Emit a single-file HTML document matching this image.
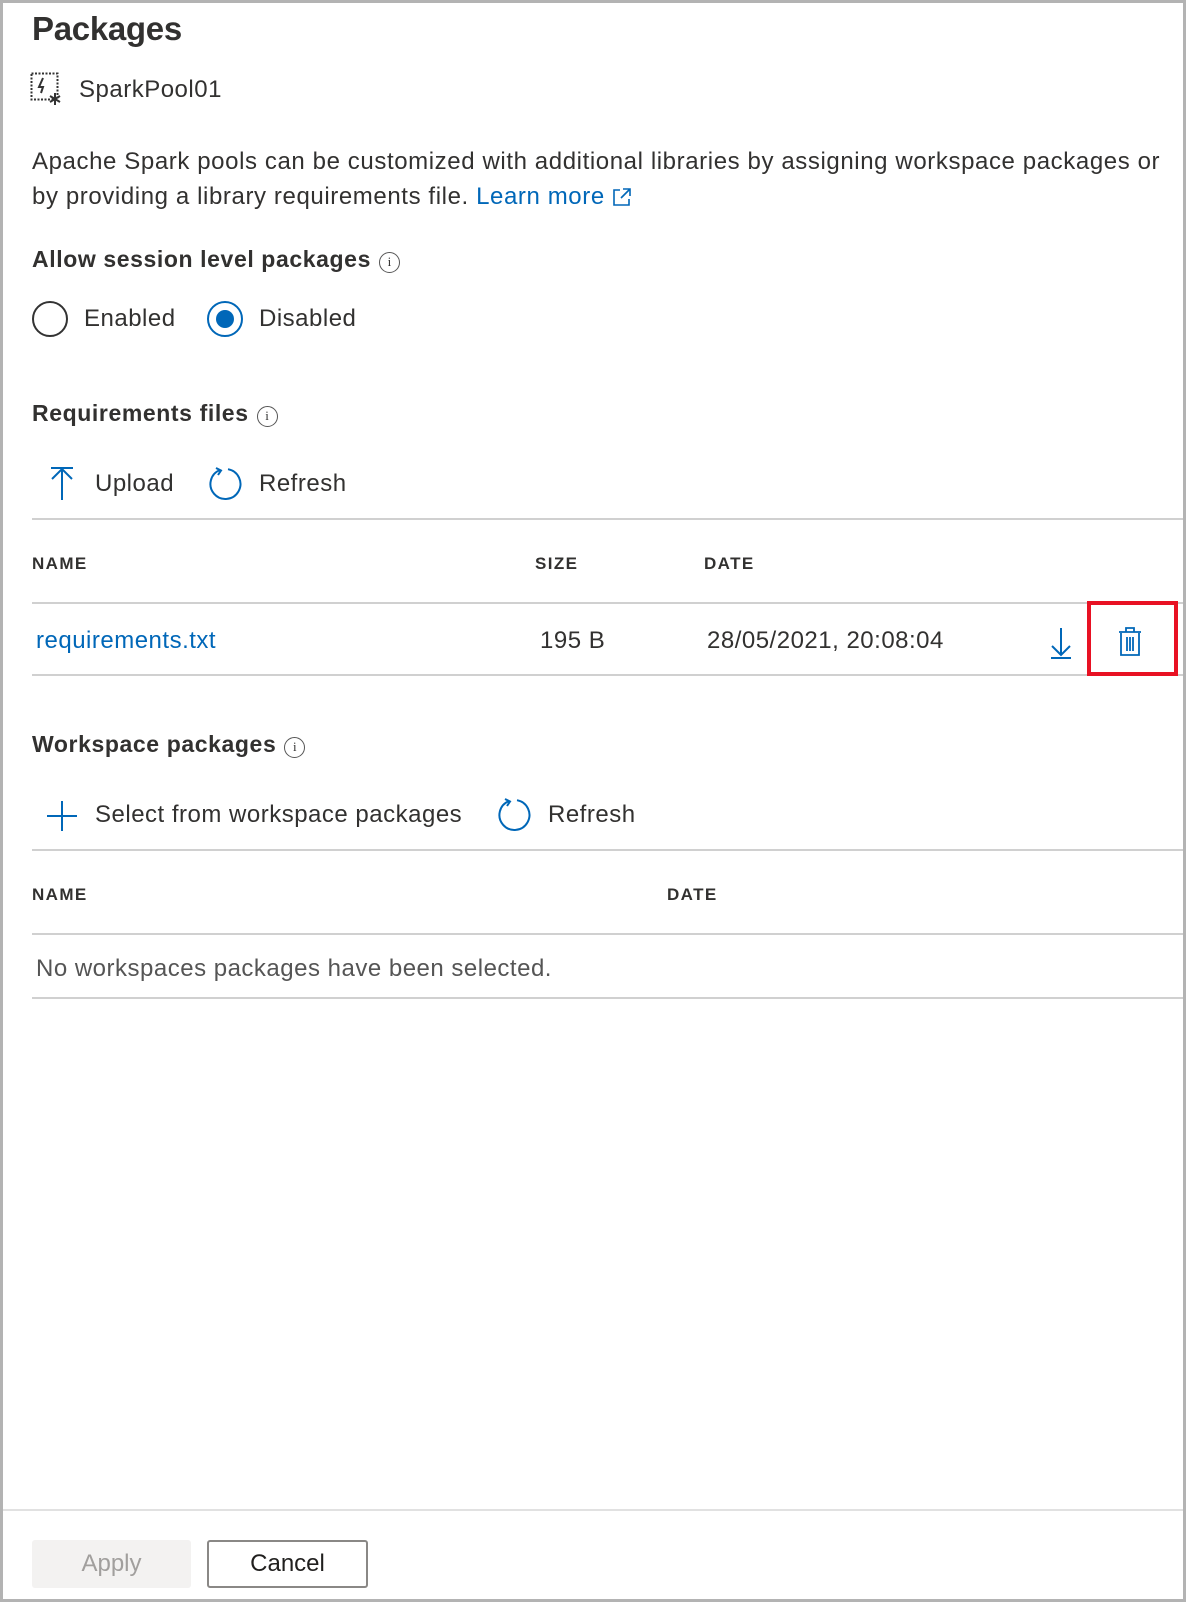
<!DOCTYPE html>
<html><head><meta charset="utf-8"><style>
*{margin:0;padding:0;box-sizing:border-box}
html,body{width:1186px;height:1602px;background:#fff;overflow:hidden}
body{font-family:"Liberation Sans",sans-serif;color:#323130;position:relative}
.frame{position:absolute;left:0;top:0;width:1186px;height:1602px;border:3px solid #b3b3b3}
.a{position:absolute;white-space:nowrap}
.line{position:absolute;left:32px;width:1151px;height:2px;background:#d0d0d0}
.h{font-size:23px;font-weight:bold;color:#323130;letter-spacing:0.6px}
.t{font-size:24px;letter-spacing:0.5px}
.th{font-size:17px;font-weight:bold;letter-spacing:1.4px}
.blue{color:#0067b8}
.info{display:inline-block;width:21px;height:21px;border:1.5px solid #555;border-radius:50%;font-size:13px;text-align:center;line-height:18px;font-weight:normal;vertical-align:1px;margin-left:8px;letter-spacing:0;font-family:"Liberation Serif",serif}
</style></head><body>
<div class="frame"></div>
<div class="a" style="left:32px;top:10px;font-size:33px;font-weight:bold;letter-spacing:-0.3px;color:#323130">Packages</div>
<svg class="a" style="left:30px;top:72px" width="34" height="34" viewBox="0 0 34 34"><rect x="1.5" y="1.5" width="26" height="26" fill="none" stroke="#333" stroke-width="2" stroke-dasharray="2 1.5"/><path d="M13 6 L9 15 H13 L11 21" fill="none" stroke="#333" stroke-width="2"/><path d="M25 21 V33 M20 24 L30 30 M30 24 L20 30" stroke="#333" stroke-width="2"/></svg>
<div class="a t" style="left:79px;top:76px">SparkPool01</div>
<div class="a t" style="left:32px;top:144px;line-height:35px;letter-spacing:0.6px">Apache Spark pools can be customized with additional libraries by assigning workspace packages or<br>by providing a library requirements file. <span class="blue">Learn more</span> <svg width="20" height="20" viewBox="0 0 20 20" style="vertical-align:-3px"><path d="M8 3H2V18H17V12M11 2H18V9M18 2L9 11" fill="none" stroke="#0067b8" stroke-width="1.6"/></svg></div>
<div class="a h" style="left:32px;top:246px">Allow session level packages<span class="info">i</span></div>
<div class="a" style="left:32px;top:301px;width:36px;height:36px;border:2px solid #333;border-radius:50%"></div>
<div class="a t" style="left:84px;top:305px">Enabled</div>
<div class="a" style="left:207px;top:301px;width:36px;height:36px;border:2px solid #0067b8;border-radius:50%"></div>
<div class="a" style="left:216px;top:310px;width:18px;height:18px;background:#0067b8;border-radius:50%"></div>
<div class="a t" style="left:259px;top:305px">Disabled</div>
<div class="a h" style="left:32px;top:400px">Requirements files<span class="info">i</span></div>
<svg class="a" style="left:48px;top:466px" width="28" height="36" viewBox="0 0 28 36"><path d="M3 2H25M14 3V34M4 13L14 3L24 13" fill="none" stroke="#0067b8" stroke-width="2"/></svg>
<div class="a t" style="left:95px;top:470px">Upload</div>
<svg class="a" style="left:208px;top:466px" width="36" height="36" viewBox="0 0 36 36"><path d="M12 4 A15 15 0 1 0 20 3.2" fill="none" stroke="#0067b8" stroke-width="2"/><path d="M8 2 L13 4.5 L10 9" fill="none" stroke="#0067b8" stroke-width="2"/></svg>
<div class="a t" style="left:259px;top:470px">Refresh</div>
<div class="line" style="top:518px"></div>
<div class="a th" style="left:32px;top:554px">NAME</div>
<div class="a th" style="left:535px;top:554px">SIZE</div>
<div class="a th" style="left:704px;top:554px">DATE</div>
<div class="line" style="top:602px"></div>
<div class="a t blue" style="left:36px;top:627px">requirements.txt</div>
<div class="a t" style="left:540px;top:627px">195 B</div>
<div class="a t" style="left:707px;top:627px">28/05/2021, 20:08:04</div>
<svg class="a" style="left:1049px;top:626px" width="24" height="34" viewBox="0 0 24 34"><path d="M12 2V29M3 20L12 29L21 20M2 32H22" fill="none" stroke="#0067b8" stroke-width="2"/></svg>
<div class="line" style="top:674px"></div>
<div class="a" style="left:1087px;top:601px;width:91px;height:75px;border:4px solid #e81123"></div>
<svg class="a" style="left:1117px;top:626px" width="26" height="32" viewBox="0 0 26 32"><path d="M2 6H24M9 6V2H17V6M4 7V29H22V7M10 11V25M13 11V25M16 11V25" fill="none" stroke="#0067b8" stroke-width="1.8"/></svg>
<div class="a h" style="left:32px;top:731px">Workspace packages<span class="info">i</span></div>
<svg class="a" style="left:45px;top:799px" width="34" height="34" viewBox="0 0 34 34"><path d="M17 2V32M2 17H32" stroke="#0067b8" stroke-width="2"/></svg>
<div class="a t" style="left:95px;top:801px">Select from workspace packages</div>
<svg class="a" style="left:497px;top:797px" width="36" height="36" viewBox="0 0 36 36"><path d="M12 4 A15 15 0 1 0 20 3.2" fill="none" stroke="#0067b8" stroke-width="2"/><path d="M8 2 L13 4.5 L10 9" fill="none" stroke="#0067b8" stroke-width="2"/></svg>
<div class="a t" style="left:548px;top:801px">Refresh</div>
<div class="line" style="top:849px"></div>
<div class="a th" style="left:32px;top:885px">NAME</div>
<div class="a th" style="left:667px;top:885px">DATE</div>
<div class="line" style="top:933px"></div>
<div class="a t" style="left:36px;top:955px;color:#555">No workspaces packages have been selected.</div>
<div class="line" style="top:997px"></div>
<div class="a" style="left:3px;top:1509px;width:1180px;height:2px;background:#e1e1e1"></div>
<div class="a" style="left:32px;top:1540px;width:159px;height:48px;background:#f3f2f1;border-radius:3px;color:#a19f9d;font-size:24px;text-align:center;line-height:48px">Apply</div>
<div class="a" style="left:207px;top:1540px;width:161px;height:48px;border:2px solid #8a8886;border-radius:3px;font-size:24px;text-align:center;line-height:44px;color:#201f1e">Cancel</div>
</body></html>
